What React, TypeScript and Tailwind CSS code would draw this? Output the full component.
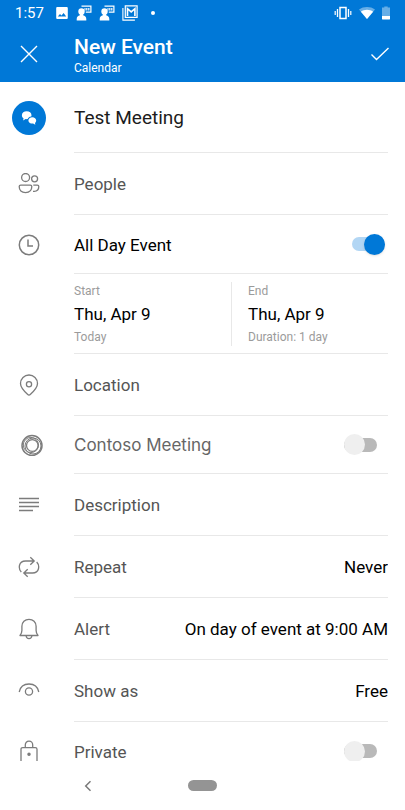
import { useId, useState } from "react";
import type { ReactNode } from "react";

type IconProps = { children: ReactNode; className?: string };

function LineIcon({ children, className = "" }: IconProps) {
  return (
    <svg
      viewBox="0 0 22 22"
      className={`size-[22px] shrink-0 fill-none stroke-[#7c7c7c] ${className}`}
      strokeWidth="1.3"
      aria-hidden="true"
    >
      {children}
    </svg>
  );
}

const PeopleIcon = () => (
  <LineIcon>
    <circle cx="7.6" cy="4.500" r="4" />
    <circle cx="16.6" cy="5.800" r="3" />
    <path d="M2.700 12.200h9.600c1 0 1.500.5 1.500 1.400 0 3.700-2.300 6-6.300 6s-6.300-2.300-6.300-6c0-.9.5-1.400 1.500-1.400z" />
    <path d="M15.300 12.200h4c1 0 1.500.5 1.500 1.400 0 3-1.500 4.800-4.600 4.800h-1.200" />
  </LineIcon>
);

const ClockIcon = () => (
  <LineIcon>
    <circle cx="11" cy="11" r="9.700" strokeWidth="1.500" />
    <path d="M10 5.500v6.500h5" strokeWidth="1.500" />
  </LineIcon>
);

const PinIcon = () => (
  <LineIcon>
    <path d="M11 21.100c-.6 0-1-.3-1.500-.8C5.400 16.500 2.500 13.700 2.500 9.500a8.500 8.500 0 0 1 17 0c0 4.200-2.900 7-7 10.800-.5.500-.9.800-1.500.8z" />
    <circle cx="11" cy="10.300" r="2.600" />
  </LineIcon>
);

const RingsIcon = () => (
  <LineIcon className="ml-[3px]">
    <circle cx="11" cy="11.500" r="10" strokeWidth="1.500" />
    <circle cx="12" cy="12" r="8" strokeWidth="1" />
    <circle cx="9.900" cy="11" r="7.600" strokeWidth="1" />
    <circle cx="11.300" cy="11.500" r="5.800" strokeWidth="1.300" />
  </LineIcon>
);

const LinesIcon = () => (
  <LineIcon>
    <path d="M1 4.500h20M1 8.500h20M1 12.500h20M1 16.500h14" />
  </LineIcon>
);

const RepeatIcon = () => (
  <LineIcon>
    <path d="M3.300 16C.1 12.600.4 5 7.500 5h8.800M12.300 1.300 16.200 5l-3.900 3.700M18.700 6c3.200 3.400 2.900 11-4.200 11H5.700M9.700 20.700 5.800 17l3.900-3.700" />
  </LineIcon>
);

const BellIcon = () => (
  <LineIcon>
    <path d="M2 17.500c1.300-1.600 1.900-2.800 1.900-5V8.300c0-4 3-7 7.100-7s7.100 3 7.100 7v4.200c0 2.200.6 3.400 1.900 5z" strokeLinejoin="round" />
    <path d="M8.100 17.700c.2 1.800 1.300 2.900 2.900 2.900s2.700-1.100 2.900-2.900" />
  </LineIcon>
);

const EyeIcon = () => (
  <LineIcon>
    <path d="M1.200 12C2.200 7 6 4 11 4s8.800 3 9.800 8" />
    <circle cx="11" cy="11.500" r="3.600" />
  </LineIcon>
);

const LockIcon = () => (
  <LineIcon>
    <path d="M3 22V9.300C3 8.200 3.600 7.600 4.700 7.600h12.600c1.100 0 1.700.6 1.700 1.700V22" />
    <path d="M7.300 7.600V5c0-2.300 1.500-3.800 3.700-3.800S14.700 2.700 14.700 5v2.600" />
    <circle cx="11" cy="14.300" r="1.100" className="fill-[#7c7c7c]" />
  </LineIcon>
);

function ChatBadge() {
  return (
    <span className="flex size-[34px] items-center justify-center rounded-full bg-[#0078d7]">
      <svg viewBox="0 0 16 16" className="size-4 fill-white" aria-hidden="true">
        <path d="M5.700 1.300c2.700 0 4.800 1.600 4.800 3.900 0 .5-.1.900-.3 1.300-2 .3-3.200 1.300-3.500 2.600-.7.100-1.500.1-2.100-.1L2.200 10.400l.3-2.200C1.400 7.500.9 6.500.9 5.200c0-2.300 2.100-3.900 4.800-3.900z" />
        <path d="M11.300 7.300c2.200 0 3.900 1.300 3.900 3.200 0 1-.5 1.800-1.200 2.400l.3 1.900-2.200-1.200c-2.700.2-4.700-1.100-4.700-3.100 0-1.900 1.700-3.200 3.900-3.200z" />
      </svg>
    </span>
  );
}

function PresenterIcon() {
  return (
    <svg viewBox="0 0 16 16" className="size-4 fill-white" aria-hidden="true">
      <circle cx="5.500" cy="6.500" r="3.200" />
      <path d="M.7 15.500V14c0-2 1.400-3.300 3.200-3.700L3.600 8h3.800l-.3 2.300c1.800.4 3.200 1.700 3.200 3.700v1.500z" />
      <path d="M5.500.5h10v7.200H9.800V6.500h4.500V1.700H5.500z" />
      <path d="M8.500 3h1v2.500h-1zM10.200 3h1.200v2.500h-1.200zM12.200 3h1.200v2.500h-1.200z" />
    </svg>
  );
}

function StatusBar() {
  return (
    <div className="flex h-[26px] items-center pr-[15px] pl-[15px] text-white">
      <span className="w-10 text-[15px] leading-5">1:57</span>
      <div className="flex items-center gap-[7px]">
        <svg viewBox="0 0 14 14" className="size-[14px]" aria-hidden="true">
          <path
            fillRule="evenodd"
            className="fill-white"
            d="M2.500 1h9c.8 0 1.300.5 1.300 1.300v9.400c0 .8-.5 1.300-1.300 1.300h-9c-.8 0-1.300-.5-1.300-1.300V2.300C1.200 1.500 1.700 1 2.500 1zM2.800 10.500h8.400L8.600 7 6.500 9.500 5 7.900z"
          />
        </svg>
        <PresenterIcon />
        <PresenterIcon />
        <svg viewBox="0 0 16 16" className="size-4 fill-none stroke-white" aria-hidden="true">
          <path d="M.9 3v12.100h12" strokeWidth="1.100" />
          <path d="M3.300.9h11.800v11.500H3.300z" strokeWidth="1.200" />
          <path d="M5.500 11V3.700l3.700 3.200 3.700-3.200V11" strokeWidth="1.600" />
        </svg>
        <span className="ml-[6px] size-1 rounded-full bg-white" />
      </div>
      <div className="ml-auto flex items-center gap-[7px]">
        <svg viewBox="0 0 18 14" className="h-[14px] w-[18px] fill-none stroke-white" aria-hidden="true">
          <path d="M6 1.500h6v11H6z" strokeWidth="1.500" />
          <path d="M3.500 3v8M14.500 3v8" strokeWidth="1.300" />
          <path d="M1.200 5v4M16.800 5v4" strokeWidth="1.200" />
        </svg>
        <svg viewBox="0 0 16 14" className="h-[14px] w-4 fill-white" aria-hidden="true">
          <path opacity=".4" d="M8 13 0 3.500C2.300 1.800 5 1 8 1s5.700.8 8 2.500z" />
          <path d="M8 13 1.900 5.700C3.600 4.500 5.700 3.800 8 3.800s4.400.7 6.100 1.900z" />
        </svg>
        <svg viewBox="0 0 8 14" className="h-[14px] w-2 fill-white" aria-hidden="true">
          <path opacity=".4" d="M2.300.5h3.400v1H8V10H0V1.500h2.300z" />
          <path d="M0 10h8v3c0 .3-.2.500-.5.500h-7c-.3 0-.5-.2-.5-.5z" />
        </svg>
      </div>
    </div>
  );
}

function Row({ icon, height, children, last = false }: { icon?: ReactNode; height: string; children: ReactNode; last?: boolean }) {
  return (
    <div className={`flex ${height}`}>
      <div className="flex w-[74px] shrink-0 items-center pl-[18px]">{icon}</div>
      <div className={`mr-[17px] flex min-w-0 flex-1 items-center ${last ? "" : "border-b border-[#e8e8e8]"}`}>{children}</div>
    </div>
  );
}

function TextRow({ icon, label }: { icon: ReactNode; label: string }) {
  return (
    <Row icon={icon} height="h-[62px]">
      <input
        type="text"
        aria-label={label}
        placeholder={label}
        className="w-full min-w-0 pt-[3px] text-[17px] text-black outline-none placeholder:text-[#555555]"
      />
    </Row>
  );
}

function SelectRow({ icon, label, options }: { icon: ReactNode; label: string; options: string[] }) {
  const id = useId();
  return (
    <Row icon={icon} height="h-[62px]">
      <label htmlFor={id} className="shrink-0 pt-[3px] text-[17px] text-[#555555]">
        {label}
      </label>
      <select
        id={id}
        className="ml-4 min-w-0 flex-1 appearance-none bg-transparent pt-[3px] text-[17px] text-black outline-none [text-align-last:right]"
      >
        {options.map((option) => (
          <option key={option}>{option}</option>
        ))}
      </select>
    </Row>
  );
}

type SwitchRowProps = {
  icon: ReactNode;
  label: string;
  initial?: boolean;
  height: string;
  labelClass?: string;
  last?: boolean;
};

function SwitchRow({ icon, label, initial = false, height, labelClass = "text-[#555555]", last }: SwitchRowProps) {
  const id = useId();
  const [on, setOn] = useState(initial);
  return (
    <Row icon={icon} height={height} last={last}>
      <label htmlFor={id} className={`flex-1 pt-[3px] text-[17px] ${labelClass}`}>
        {label}
      </label>
      <input
        id={id}
        type="checkbox"
        role="switch"
        checked={on}
        onChange={(e) => setOn(e.target.checked)}
        className="mr-[11px] flex h-[14px] w-[33px] shrink-0 cursor-pointer appearance-none items-center rounded-full bg-[#b9b9b9] before:size-[21px] before:shrink-0 before:rounded-full before:bg-[#efefef] before:content-[''] checked:mr-[3px] checked:justify-end checked:bg-[#b2d6f4] checked:before:bg-[#0078d7] checked:before:shadow-sm"
      />
    </Row>
  );
}

function DateButton({ title, date, note, className = "" }: { title: string; date: string; note: string; className?: string }) {
  return (
    <button type="button" className={`flex flex-col text-left ${className}`}>
      <span className="text-xs leading-[18px] text-[#9b9b9b]">{title}</span>
      <span className="text-[17px] leading-7 text-black">{date}</span>
      <span className="text-xs leading-[18px] text-[#9b9b9b]">{note}</span>
    </button>
  );
}

export default function App() {
  return (
    <div className="flex h-screen flex-col bg-white font-['Roboto',sans-serif]">
      <header className="shrink-0 bg-[#0078d7] text-white">
        <StatusBar />
        <div className="flex h-14 items-center pr-4">
          <div className="w-[74px] shrink-0 pl-[18px]">
            <button type="button" aria-label="Close" className="block">
              <svg viewBox="0 0 22 22" className="size-[22px] stroke-white" strokeWidth="1.400" aria-hidden="true">
                <path d="m3 3 16 16M19 3 3 19" />
              </svg>
            </button>
          </div>
          <div className="flex-1 pt-1">
            <h1 className="text-[21px] leading-6 font-medium">New Event</h1>
            <p className="text-xs leading-[18px]">Calendar</p>
          </div>
          <button type="button" aria-label="Save" className="block">
            <svg viewBox="0 0 18 18" className="size-[18px] fill-none stroke-white" strokeWidth="1.400" aria-hidden="true">
              <path d="m.5 9.500 5 5L17.500 3" />
            </svg>
          </button>
        </div>
      </header>

      <main className="min-h-0 flex-1 overflow-y-auto [scrollbar-width:none]">
        <div className="flex h-[71px]">
          <div className="flex w-[74px] shrink-0 items-center pl-3">
            <ChatBadge />
          </div>
          <div className="mr-[17px] flex min-w-0 flex-1 items-center border-b border-[#e8e8e8]">
            <input
              type="text"
              aria-label="Title"
              defaultValue="Test Meeting"
              className="w-full min-w-0 pt-[3px] text-[19px] text-[#1c1c1c] outline-none"
            />
          </div>
        </div>
        <TextRow icon={<PeopleIcon />} label="People" />
        <SwitchRow icon={<ClockIcon />} label="All Day Event" initial height="h-[59px]" labelClass="text-black" />
        <Row height="h-20">
          <div className="grid flex-1 grid-cols-2">
            <DateButton title="Start" date="Thu, Apr 9" note="Today" />
            <DateButton title="End" date="Thu, Apr 9" note="Duration: 1 day" className="border-l border-[#e8e8e8] pl-4" />
          </div>
        </Row>
        <TextRow icon={<PinIcon />} label="Location" />
        <SwitchRow icon={<RingsIcon />} label="Contoso Meeting" height="h-[58px]" labelClass="font-['Inter',sans-serif] text-[#666666]" />
        <TextRow icon={<LinesIcon />} label="Description" />
        <SelectRow icon={<RepeatIcon />} label="Repeat" options={["Never", "Every day", "Every week", "Every month", "Every year"]} />
        <SelectRow icon={<BellIcon />} label="Alert" options={["On day of event at 9:00 AM", "1 day before at 9:00 AM", "None"]} />
        <SelectRow icon={<EyeIcon />} label="Show as" options={["Free", "Busy", "Tentative", "Away"]} />
        <SwitchRow icon={<LockIcon />} label="Private" height="h-[58px]" last />
      </main>

      <nav className="grid h-[49px] shrink-0 grid-cols-[1fr_auto_1fr] items-center">
        <button type="button" aria-label="Back" className="ml-[82px] block w-3">
          <svg viewBox="0 0 12 12" className="size-3 fill-none stroke-[#7a7a7a]" strokeWidth="1.500" aria-hidden="true">
            <path d="M8.500 1.200 3.700 6l4.800 4.800" />
          </svg>
        </button>
        <button type="button" aria-label="Home" className="h-[11px] w-[29px] rounded-full bg-[#949494]" />
      </nav>
    </div>
  );
}
